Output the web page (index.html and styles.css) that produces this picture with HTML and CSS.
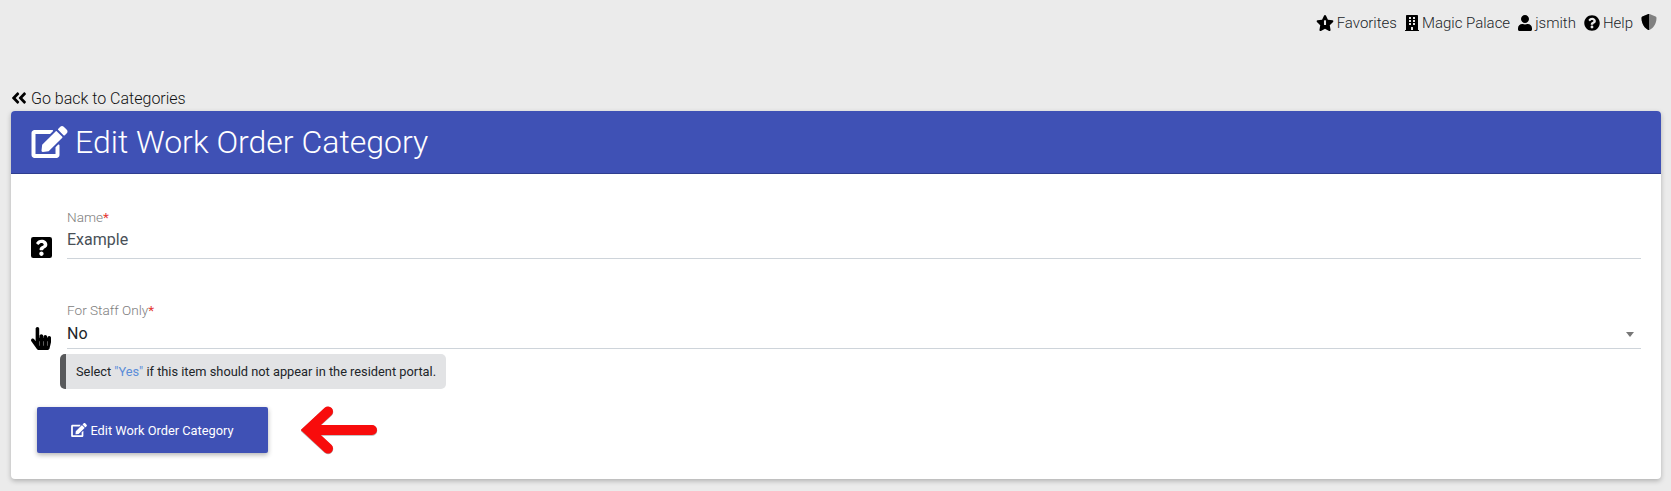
FILE: index.html
```html
<!DOCTYPE html>
<html lang="en">
<head>
<meta charset="utf-8">
<title>Edit Work Order Category</title>
<link rel="stylesheet" href="styles.css">
</head>
<body>
<nav class="topbar">
  <a class="top-item"><svg class="ic" viewBox="0 0 576 512"><path d="M259.3 17.8L194 150.2 47.9 171.5c-26.2 3.8-36.7 36.1-17.7 54.6l105.7 103-25 145.5c-4.500 26.3 23.2 46 46.4 33.7L288 439.6l130.7 68.7c23.2 12.2 50.9-7.400 46.4-33.7l-25-145.5 105.7-103c19-18.5 8.500-50.8-17.7-54.6L382 150.2 316.7 17.8c-11.7-23.6-45.6-23.9-57.4 0z"/><rect x="255" y="170" width="66" height="150" rx="16" fill="#ebebeb"/></svg>Favorites</a>
  <a class="top-item"><svg class="ic ic-narrow" viewBox="0 0 448 512"><path d="M436 480h-20V24c0-13.255-10.745-24-24-24H56C42.745 0 32 10.745 32 24v456H12c-6.627 0-12 5.373-12 12v20h448v-20c0-6.627-5.373-12-12-12zM128 76c0-6.627 5.373-12 12-12h40c6.627 0 12 5.373 12 12v40c0 6.627-5.373 12-12 12h-40c-6.627 0-12-5.373-12-12V76zm0 96c0-6.627 5.373-12 12-12h40c6.627 0 12 5.373 12 12v40c0 6.627-5.373 12-12 12h-40c-6.627 0-12-5.373-12-12v-40zm52 148h-40c-6.627 0-12-5.373-12-12v-40c0-6.627 5.373-12 12-12h40c6.627 0 12 5.373 12 12v40c0 6.627-5.373 12-12 12zm76 160h-64v-84c0-6.627 5.373-12 12-12h40c6.627 0 12 5.373 12 12v84zm64-172c0 6.627-5.373 12-12 12h-40c-6.627 0-12-5.373-12-12v-40c0-6.627 5.373-12 12-12h40c6.627 0 12 5.373 12 12v40zm0-96c0 6.627-5.373 12-12 12h-40c-6.627 0-12-5.373-12-12v-40c0-6.627 5.373-12 12-12h40c6.627 0 12 5.373 12 12v40zm0-96c0 6.627-5.373 12-12 12h-40c-6.627 0-12-5.373-12-12V76c0-6.627 5.373-12 12-12h40c6.627 0 12 5.373 12 12v40z"/></svg>Magic Palace</a>
  <a class="top-item"><svg class="ic ic-narrow" viewBox="0 0 448 512"><path d="M224 256c70.7 0 128-57.3 128-128S294.7 0 224 0 96 57.3 96 128s57.3 128 128 128zm89.6 32h-16.7c-22.2 10.2-46.9 16-72.9 16s-50.6-5.8-72.9-16h-16.7C60.2 288 0 348.2 0 422.4V464c0 26.5 21.5 48 48 48h352c26.5 0 48-21.5 48-48v-41.6c0-74.2-60.2-134.4-134.4-134.4z"/></svg>jsmith</a>
  <a class="top-item"><svg class="ic ic-round" viewBox="0 0 512 512"><path d="M504 256c0 136.997-111.043 248-248 248S8 392.997 8 256C8 119.083 119.043 8 256 8s248 111.083 248 248zM262.655 90c-54.497 0-89.255 22.957-116.549 63.758-3.536 5.286-2.353 12.415 2.715 16.258l34.699 26.31c5.205 3.947 12.621 3.008 16.665-2.122 17.864-22.658 30.113-35.797 57.303-35.797 20.429 0 45.698 13.148 45.698 32.958 0 14.976-12.363 22.667-32.534 33.976C247.128 238.528 216 254.941 216 296v4c0 6.627 5.373 12 12 12h56c6.627 0 12-5.373 12-12v-1.333c0-28.462 83.186-29.647 83.186-106.667 0-58.002-60.165-102-116.531-102zM256 338c-25.365 0-46 20.635-46 46 0 25.364 20.635 46 46 46s46-20.636 46-46c0-25.365-20.635-46-46-46z"/></svg>Help</a>
  <a class="top-item"><svg class="ic ic-round" viewBox="0 0 512 512"><clipPath id="half"><rect x="0" y="0" width="256" height="512"/></clipPath><path fill="#808080" d="M466.5 83.7l-192-80a48.15 48.15 0 0 0-36.9 0l-192 80C27.7 91.1 16 108.6 16 128c0 198.5 114.5 335.7 221.5 380.3 11.8 4.9 25.1 4.9 36.9 0C360.1 472.6 496 349.3 496 128c0-19.4-11.7-36.9-29.5-44.3z"/><path clip-path="url(#half)" d="M466.5 83.7l-192-80a48.15 48.15 0 0 0-36.9 0l-192 80C27.7 91.1 16 108.6 16 128c0 198.5 114.5 335.7 221.5 380.3 11.8 4.9 25.1 4.9 36.9 0C360.1 472.6 496 349.3 496 128c0-19.4-11.7-36.9-29.5-44.3z"/></svg></a>
</nav>
<a class="back"><svg class="ic-back" viewBox="0 0 448 512"><path d="M223.7 239l136-136c9.4-9.4 24.6-9.4 33.9 0l22.6 22.6c9.4 9.4 9.4 24.6 0 33.9L319.9 256l96.4 96.4c9.4 9.4 9.4 24.6 0 33.9L393.7 409c-9.4 9.4-24.6 9.4-33.9 0l-136-136c-9.5-9.4-9.5-24.6-.1-34zm-192 34l136 136c9.4 9.4 24.6 9.4 33.9 0l22.6-22.6c9.4-9.4 9.4-24.6 0-33.9L127.9 256l96.4-96.4c9.4-9.4 9.4-24.6 0-33.9L201.7 103c-9.4-9.4-24.6-9.4-33.9 0l-136 136c-9.5 9.4-9.5 24.6-.1 34z"/></svg>Go back to Categories</a>
<main class="card">
  <header class="card-head">
    <svg class="ic-title" viewBox="0 0 576 512"><path d="M402.6 83.2l90.2 90.2c3.8 3.8 3.8 10 0 13.8L274.4 405.6l-92.8 10.3c-12.4 1.4-22.9-9.1-21.5-21.5l10.3-92.8L388.8 83.2c3.8-3.8 10-3.8 13.8 0zm162-22.9l-48.8-48.8c-15.2-15.2-39.9-15.2-55.2 0l-35.4 35.4c-3.8 3.8-3.8 10 0 13.8l90.2 90.2c3.8 3.8 10 3.8 13.8 0l35.4-35.4c15.2-15.3 15.2-40 0-55.2zM384 346.2V448H64V128h229.8c3.2 0 6.2-1.3 8.5-3.5l40-40c7.6-7.6 2.2-20.5-8.5-20.5H48C21.5 64 0 85.5 0 112v352c0 26.5 21.5 48 48 48h352c26.5 0 48-21.5 48-48V306.2c0-10.7-12.9-16-20.5-8.5l-40 40c-2.2 2.3-3.5 5.3-3.5 8.5z"/></svg>
    <h1 class="title">Edit Work Order Category</h1>
  </header>
  <form class="card-body">
    <div class="row row-name">
      <svg class="ic-field ic-question" viewBox="0 0 448 448"><rect x="0" y="0" width="448" height="448" rx="48"/><path fill="#fff" transform="translate(224 224) scale(1.22) translate(-224 -246)" d="M228 110c-45 0-74 19-96 53-3 4-2 10 2 13l29 22c4 3 10 2 14-2 15-19 25-30 48-30 17 0 38 11 38 27 0 13-10 19-27 28-20 11-46 25-46 59v3c0 6 4 10 10 10h47c6 0 10-4 10-10v-1c0-24 69-25 69-89 0-48-50-83-98-83zm-5 207c-21 0-38 17-38 38s17 38 38 38 38-17 38-38-17-38-38-38z"/></svg>
      <div class="field">
        <label class="label">Name<span class="req">*</span></label>
        <div class="value value-muted">Example</div>
      </div>
    </div>
    <div class="row row-staff">
      <svg class="ic-field ic-hand" viewBox="0 0 448 512"><path d="M448 240v96c0 3.084-.356 6.159-1.063 9.162l-32 136C410.686 499.23 394.562 512 376 512H168a40.004 40.004 0 0 1-32.35-16.473l-127.997-176c-12.993-17.866-9.043-42.883 8.822-55.876 17.867-12.994 42.884-9.043 55.877 8.823L104 315.992V40c0-22.091 17.908-40 40-40s40 17.909 40 40v200h8v-40c0-22.091 17.908-40 40-40s40 17.909 40 40v40h8v-24c0-22.091 17.908-40 40-40s40 17.909 40 40v24h8c0-22.091 17.908-40 40-40s40 17.909 40 40zm-256 80h-8v96h8v-96zm88 0h-8v96h8v-96zm88 0h-8v96h8v-96z"/></svg>
      <div class="field">
        <label class="label">For Staff Only<span class="req">*</span></label>
        <div class="value value-select">No<span class="caret"></span></div>
      </div>
    </div>
    <p class="hint">Select <span class="hint-yes">"Yes"</span> if this item should not appear in the resident portal.</p>
    <div class="actions">
      <button type="button" class="btn"><svg class="ic-btn" viewBox="0 0 576 512"><path d="M402.6 83.2l90.2 90.2c3.8 3.8 3.8 10 0 13.8L274.4 405.6l-92.8 10.3c-12.4 1.4-22.9-9.1-21.5-21.5l10.3-92.8L388.8 83.2c3.8-3.8 10-3.8 13.8 0zm162-22.9l-48.8-48.8c-15.2-15.2-39.9-15.2-55.2 0l-35.4 35.4c-3.8 3.8-3.8 10 0 13.8l90.2 90.2c3.8 3.8 10 3.8 13.8 0l35.4-35.4c15.2-15.3 15.2-40 0-55.2zM384 346.2V448H64V128h229.8c3.2 0 6.2-1.3 8.5-3.5l40-40c7.6-7.6 2.2-20.5-8.5-20.5H48C21.5 64 0 85.5 0 112v352c0 26.5 21.5 48 48 48h352c26.5 0 48-21.5 48-48V306.2c0-10.7-12.9-16-20.5-8.5l-40 40c-2.2 2.3-3.5 5.3-3.5 8.5z"/></svg>Edit Work Order Category</button>
      <svg class="arrow" viewBox="0 0 84 54"><g class="arrow-shadow"><path d="M71 27.500H8M27 9L7 27.500 27 46"/></g><g class="arrow-line"><path d="M71 27H8M27 8.500L7 27 27 45.500"/></g></svg>
    </div>
  </form>
</main>
</body>
</html>
```
FILE: styles.css
```css
* { box-sizing: border-box; }
html, body { margin: 0; height: 100%; }
body {
  background: #ebebeb;
  font-family: Roboto, "Liberation Sans", sans-serif;
  color: #212529;
  overflow: hidden;
  padding: 0 10px 0 11px;
}
.topbar {
  height: 86px;
  padding: 14px 4px 0 0;
  display: flex;
  justify-content: flex-end;
  align-items: flex-start;
  gap: 8px;
  font-size: 15px;
  font-weight: 300;
  line-height: 18px;
}
.top-item { display: flex; align-items: center; gap: 3px; }
.ic { width: 18px; height: 16px; display: block; }
.ic-narrow { width: 14px; }
.ic-round { width: 16px; }
.back {
  display: flex;
  align-items: center;
  gap: 4px;
  height: 25px;
  padding-bottom: 1px;
  font-size: 16px;
  font-weight: 300;
  color: #111;
}
.ic-back { width: 16px; height: 18px; display: block; }
.card {
  height: 368px;
  background: #fff;
  border-radius: 4px;
  box-shadow: 0 2px 5px rgba(0,0,0,.25);
  overflow: hidden;
}
.card-head {
  height: 63px;
  background: #3f51b5;
  border-bottom: 1px solid #2f3e8f;
  color: #fff;
  display: flex;
  align-items: center;
  padding-left: 20px;
  gap: 7px;
}
.ic-title { width: 37px; height: 32px; fill: #fff; display: block; }
.title { margin: 0; font-size: 32px; font-weight: 300; line-height: 40px; }
.card-body { padding: 0 20px; }
.row { display: flex; align-items: flex-end; }
.row-name { padding-top: 37px; }
.row-staff { padding-top: 45px; }
.ic-field { flex: none; display: block; }
.ic-question { width: 21px; height: 21px; margin: 0 15px 1px 0; }
.ic-hand { width: 20px; height: 23px; margin: 0 16px -1px 0; }
.field { flex: 1; }
.label { display: block; font-size: 13.600px; line-height: 12px; margin-bottom: 2px; color: #7d7d7d; font-weight: 300; }
.req { color: #e53935; font-weight: 400; }
.value {
  position: relative;
  font-size: 16px;
  line-height: 24px;
  border-bottom: 1px solid #ced4da;
}
.value-muted { height: 34px; padding-top: 3px; color: #495057; }
.value-select { height: 31px; padding-top: 4px; color: #212529; }
.caret {
  position: absolute;
  right: 7px;
  top: 14px;
  border-left: 4px solid transparent;
  border-right: 4px solid transparent;
  border-top: 5px solid #777;
}
.hint {
  margin: 5px 0 0 29px;
  width: 386px;
  height: 35px;
  background: #e2e3e5;
  border-left: 6px solid #58595b;
  border-radius: 5px;
  font-size: 12.800px;
  line-height: 35px;
  padding-left: 10px;
  color: #212529;
  white-space: nowrap;
}
.hint-yes { color: #5b8dd9; }
.actions { display: flex; align-items: center; margin: 14px 0 0 6px; gap: 33px; }
.btn {
  width: 231px;
  height: 46px;
  background: #3f51b5;
  color: #fff;
  border: 0;
  border-radius: 2px;
  box-shadow: 0 2px 5px rgba(0,0,0,.3);
  font: 400 12.800px Roboto, "Liberation Sans", sans-serif;
  display: flex;
  align-items: center;
  justify-content: center;
  gap: 3px;
}
.ic-btn { width: 16px; height: 14px; fill: #fff; display: block; }
.arrow { width: 84px; height: 54px; display: block; }
.arrow path { fill: none; stroke-linecap: round; stroke-linejoin: miter; }
.arrow-shadow { stroke: #b0b0b0; stroke-width: 10.500; }
.arrow-line { stroke: #f80c0c; stroke-width: 10; }
```
